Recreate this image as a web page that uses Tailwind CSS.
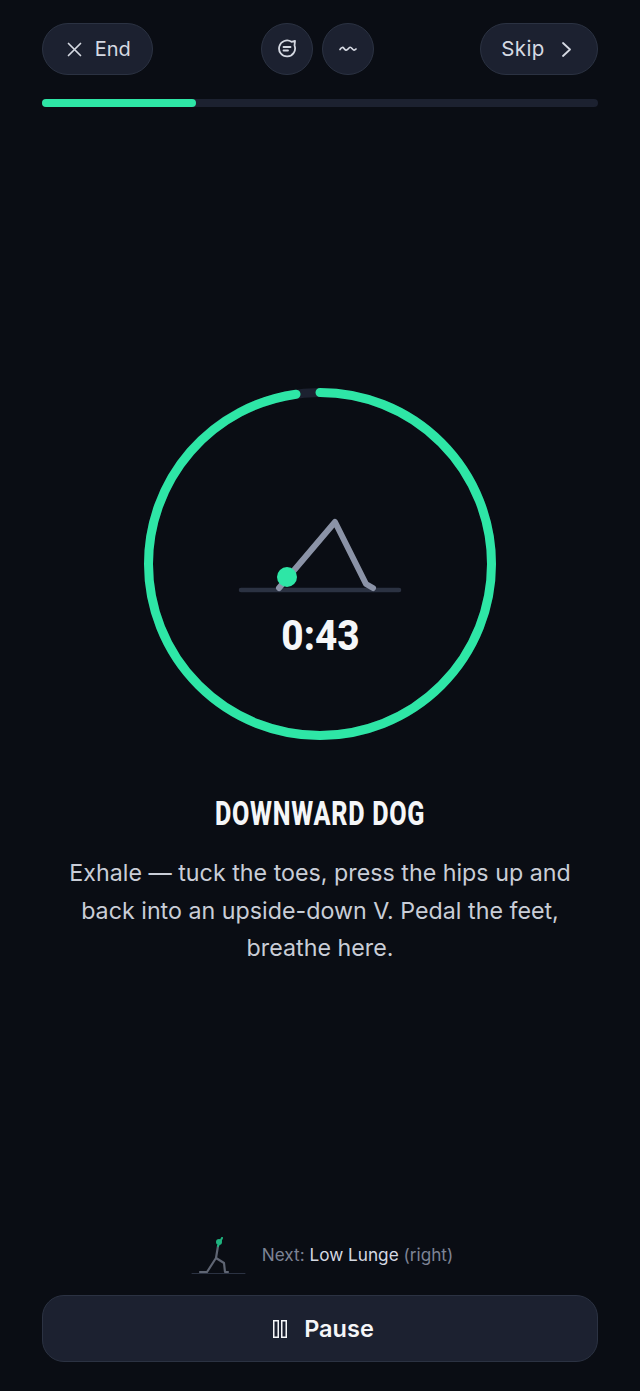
<!DOCTYPE html>
<html lang="en">
<head>
  <meta charset="UTF-8" />
  <meta name="viewport" content="width=device-width, initial-scale=1.0" />
  <title>Session</title>
  <script src="https://cdn.jsdelivr.net/npm/@tailwindcss/browser@4"></script>
</head>
<body class="bg-[#0a0d14] font-['Inter',sans-serif]">
  <div class="h-[1391px] flex flex-col px-[42px] pt-[23px] pb-[29px]">
    <div class="flex items-center justify-between">
      <button class="h-[52px] w-[111px] flex items-center justify-center gap-[12.500px] pl-[3px] rounded-full bg-[#1c2130] border-[1.5px] border-[#2b3242] text-[20px] text-[#d5d9e2]">
        <svg class="w-[15px] h-[15px]" viewBox="0 0 15 15" fill="none" stroke="#d5d9e2" stroke-width="1.7" stroke-linecap="round"><path d="M1.500 1.500l12 12M13.500 1.500l-12 12"/></svg>
        <span>End</span>
      </button>
      <div class="flex gap-[9px] ml-[1px]">
        <button class="w-[52px] h-[52px] flex items-center justify-center rounded-full bg-[#1c2130] border-[1.5px] border-[#2b3242]">
          <svg class="w-[20px] h-[20px]" viewBox="0 0 20 20" fill="none" stroke="#d5d9e2" stroke-width="1.8" stroke-linecap="round" stroke-linejoin="round"><path d="M18 2l-3.500 .8A8 8 0 1 0 17.500 6.500z"/><path d="M6.500 8h7M6.500 11.500h4.500"/></svg>
        </button>
        <button class="w-[52px] h-[52px] flex items-center justify-center rounded-full bg-[#1c2130] border-[1.5px] border-[#2b3242]">
          <svg class="w-[18px] h-[10px]" viewBox="0 0 18 10" fill="none" stroke="#d5d9e2" stroke-width="1.7" stroke-linecap="round"><path d="M1 5.500c1.500-2.500 3-2.500 4-1s2.500 2.500 4 .5 2.500-2.500 4-.5 2.500 2 4 .5"/></svg>
        </button>
      </div>
      <button class="h-[52px] w-[118px] flex items-center justify-center gap-[17px] pr-[6px] rounded-full bg-[#1c2130] border-[1.5px] border-[#2b3242] text-[20.500px] tracking-[0.4px] text-[#d5d9e2]">
        <span>Skip</span>
        <svg class="w-[9px] h-[15px]" viewBox="0 0 9 15" fill="none" stroke="#d5d9e2" stroke-width="1.8" stroke-linecap="round" stroke-linejoin="round"><path d="M1 1l7 6.500-7 6.500"/></svg>
      </button>
    </div>

    <div class="mt-[24px] h-[8px] rounded-full bg-[#1c2130]">
      <div class="h-full w-[154px] rounded-full bg-[#2ee6a6]"></div>
    </div>

    <main class="mt-[281px] flex flex-col items-center">
      <div class="relative w-[352px] h-[352px]">
        <svg class="w-full h-full" viewBox="0 0 352 352" fill="none">
          <circle cx="176" cy="176" r="171.500" stroke="#1c2130" stroke-width="9"/>
          <circle cx="176" cy="176" r="171.500" stroke="#2ee6a6" stroke-width="9" stroke-linecap="round" stroke-dasharray="1053 1078" transform="rotate(-90 176 176)"/>
        </svg>
        <div class="absolute inset-0 flex flex-col items-center pt-[130px]">
          <svg class="w-[164px] h-[76px]" viewBox="0 0 164 76" fill="none" stroke-linecap="round" stroke-linejoin="round">
            <path d="M3 72h158" stroke="#2b3242" stroke-width="4.500"/>
            <path d="M41 70L97 4l31 62 7 4" stroke="#8b93a7" stroke-width="6"/>
            <circle cx="49" cy="59" r="10" fill="#2ee6a6"/>
          </svg>
          <div class="mt-[17px] text-[43px] leading-[48px] font-extrabold text-[#f5f6f8] font-['Roboto',sans-serif] scale-x-[0.9]">0:43</div>
        </div>
      </div>
      <h1 class="mt-[51px] text-[34px] leading-[44px] font-extrabold tracking-[1px] text-[#f5f6f8] font-['Roboto',sans-serif] scale-x-[0.74]">DOWNWARD DOG</h1>
      <p class="mt-[19px] w-[530px] text-center text-[23.250px] leading-[37.5px] text-[#c9cdd7]">Exhale — tuck the toes, press the hips up and back into an upside-down V. Pedal the feet, breathe here.</p>
    </main>

    <div class="mt-auto flex items-center justify-center gap-[16px] pl-[3px]">
      <svg class="w-[56px] h-[38px]" viewBox="0 0 56 38" fill="none" stroke-linecap="round" stroke-linejoin="round">
        <path d="M2 36.500h53" stroke="#2b3242" stroke-width="1"/>
        <path d="M10 35h7l9-14 8 5 1 9h3M26 21l2-12" stroke="#5f6573" stroke-width="2.200"/>
        <path d="M28 9l4-8" stroke="#1fb37f" stroke-width="2"/>
        <circle cx="29" cy="5" r="3" fill="#1fb37f"/>
      </svg>
      <p class="pb-[2px] text-[17.200px] text-[#7d8395]">Next: <span class="text-[#d5d9e2]">Low Lunge</span> (right)</p>
    </div>

    <button class="mt-[20px] h-[67px] flex items-center justify-center gap-[17px] pt-[1px] pl-[7px] rounded-[22px] bg-[#1c2130] border-[1.5px] border-[#2b3242] text-[23.500px] font-semibold text-[#f5f6f8]">
      <svg class="w-[14px] h-[18px]" viewBox="0 0 14 18" fill="none" stroke="#f5f6f8" stroke-width="1.500"><rect x="0.750" y="0.750" width="4.500" height="16.500"/><rect x="8.750" y="0.750" width="4.500" height="16.500"/></svg>
      <span>Pause</span>
    </button>
  </div>
</body>
</html>
